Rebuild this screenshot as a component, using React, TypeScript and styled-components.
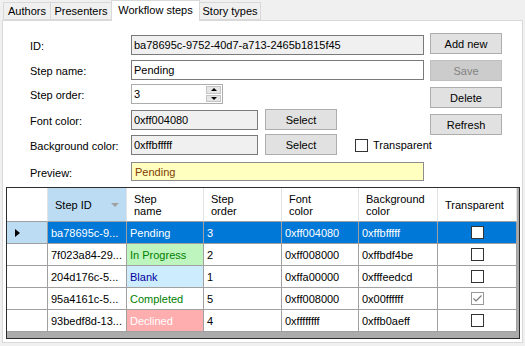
import React from 'react';
import styled, { createGlobalStyle } from 'styled-components';

const GlobalStyle = createGlobalStyle`
  html, body { margin: 0; padding: 0; background: #f0f0f0; }
  body { font-family: "Liberation Sans", Arial, sans-serif; font-size: 11px; color: #000; }
  * { box-sizing: border-box; }
`;

const Window = styled.div`
  width: 525px;
  height: 346px;
  padding: 0 2px 3px 2px;
  display: flex;
  flex-direction: column;
  overflow: hidden;
`;

const TabStrip = styled.div`
  height: 20px;
  display: flex;
  align-items: flex-end;
  padding-left: 1px;
`;

const Tab = styled.div<{ $w: number; $active?: boolean }>`
  width: ${p => p.$w}px;
  height: ${p => (p.$active ? 21 : 18)}px;
  margin-bottom: ${p => (p.$active ? -1 : 0)}px;
  position: relative;
  z-index: ${p => (p.$active ? 1 : 0)};
  border: 1px solid #d9d9d9;
  border-bottom: ${p => (p.$active ? 'none' : '1px solid #d9d9d9')};
  margin-right: -1px;
  background: ${p => (p.$active ? '#ffffff' : '#f0f0f0')};
  display: flex;
  align-items: center;
  justify-content: center;
  padding-bottom: ${p => (p.$active ? 2 : 0)}px;
`;

const Page = styled.div`
  flex: 1;
  border: 1px solid #d9d9d9;
  background: #ffffff;
  display: flex;
  flex-direction: column;
`;

const FormArea = styled.div`
  display: flex;
  gap: 6px;
  padding: 12px 0 0 27px;
`;

const Fields = styled.div`
  margin-top: 2px;
  width: 394px;
  display: grid;
  grid-template-columns: 101px 127px 7px 72px 87px;
  grid-template-rows: 25px 24px 26px 25px 27px 19px;
  align-items: start;
`;

const Label = styled.div`
  grid-column: 1;
  height: 20px;
  display: flex;
  align-items: center;
  padding-top: 1px;
`;

const TextBox = styled.input<{ $wide?: boolean; $readonly?: boolean }>`
  grid-column: ${p => (p.$wide ? '2 / -1' : '2')};
  width: 100%;
  height: 20px;
  border: 1px solid #7a7a7a;
  background: ${p => (p.$readonly ? '#f0f0f0' : '#ffffff')};
  font: inherit;
  color: #000;
  padding: 0 2px;
  margin: 0;
  outline: none;
`;

const Preview = styled.div<{ $bg: string; $fg: string }>`
  grid-column: 2 / -1;
  height: 19px;
  border: 1px solid #8c8c8c;
  background: ${p => p.$bg};
  color: ${p => p.$fg};
  display: flex;
  align-items: center;
  padding: 0 3px;
`;

const Numeric = styled.div`
  grid-column: 2;
  width: 92px;
  height: 20px;
  border: 1px solid #acacac;
  display: flex;
  background: #fff;
`;

const NumericText = styled.div`
  flex: 1;
  display: flex;
  align-items: center;
  padding: 0 2px;
`;

const Spinner = styled.div`
  width: 16px;
  display: flex;
  flex-direction: column;
  padding: 1px 1px 1px 0;
  gap: 1px;
`;

const SpinButton = styled.div<{ $down?: boolean }>`
  flex: 1;
  background: #e6e6e6;
  border: 1px solid #c4c4c4;
  display: flex;
  align-items: center;
  justify-content: center;
  &::after {
    content: '';
    border-left: 3px solid transparent;
    border-right: 3px solid transparent;
    ${p => (p.$down ? 'border-top: 3px solid #000;' : 'border-bottom: 3px solid #000;')}
  }
`;

const Button = styled.button`
  width: 72px;
  height: 21px;
  border: 1px solid #adadad;
  background: #e1e1e1;
  font: inherit;
  color: #000;
  padding: 0;
  margin: 0;
  &:disabled {
    background: #cccccc;
    border-color: #bfbfbf;
    color: #838383;
  }
`;

const SelectButton = styled(Button)`
  grid-column: 4;
  margin-top: -1px;
`;

const Buttons = styled.div`
  display: flex;
  flex-direction: column;
  gap: 6px;
`;

const CheckRow = styled.label`
  grid-column: 5;
  height: 20px;
  display: flex;
  align-items: center;
  gap: 5px;
  padding-left: 18px;
  white-space: nowrap;
`;

const Box = styled.span<{ $checked?: boolean }>`
  flex-shrink: 0;
  width: 13px;
  height: 13px;
  border: 1px solid ${p => (p.$checked ? '#999999' : '#333333')};
  background: #fff;
  display: inline-flex;
  align-items: center;
  justify-content: center;
`;

const Grid = styled.div`
  margin: 6px 2px 0 3px;
  height: 152px;
  border: 1px solid #2d2d2d;
  background: #ababab;
  overflow: hidden;
`;

const Row = styled.div<{ $head?: boolean }>`
  display: grid;
  grid-template-columns: 41px 79px 77px 78px 77px 79px 79px;
  height: ${p => (p.$head ? 34 : 22)}px;
  width: 510px;
`;

const HeadCell = styled.div<{ $sorted?: boolean }>`
  background: ${p => (p.$sorted ? '#bcdcf4' : '#ffffff')};
  border-right: 1px solid #e3e3e3;
  border-bottom: 1px solid #a0a0a0;
  display: flex;
  align-items: center;
  padding: 0 4px 0 7px;
  line-height: 12px;
`;

const SortGlyph = styled.span`
  margin-left: auto;
  margin-right: 3px;
  border-left: 4px solid transparent;
  border-right: 4px solid transparent;
  border-top: 4px solid #a0a0a0;
`;

const RowHeader = styled.div<{ $sel?: boolean }>`
  background: ${p => (p.$sel ? '#bcdcf4' : '#ffffff')};
  border-right: 1px solid #a0a0a0;
  border-bottom: 1px solid #a0a0a0;
  display: flex;
  align-items: center;
  padding-left: 8px;
`;

const Arrow = styled.span`
  border-left: 5px solid #000;
  border-top: 4px solid transparent;
  border-bottom: 4px solid transparent;
`;

const Cell = styled.div<{ $sel?: boolean; $bg?: string; $fg?: string; $center?: boolean }>`
  background: ${p => (p.$sel ? '#0078d7' : p.$bg || '#ffffff')};
  color: ${p => (p.$sel ? '#ffffff' : p.$fg || '#000000')};
  border-right: 1px solid #a0a0a0;
  border-bottom: 1px solid #a0a0a0;
  display: flex;
  align-items: center;
  justify-content: ${p => (p.$center ? 'center' : 'flex-start')};
  padding-left: ${p => (p.$center ? 0 : 3)}px;
  white-space: nowrap;
  overflow: hidden;
`;

interface Step {
  id: string;
  name: string;
  order: number;
  font: string;
  back: string;
  fg: string;
  bg: string;
  transparent: boolean;
}

const steps: Step[] = [
  { id: 'ba78695c-9...', name: 'Pending', order: 3, font: '0xff004080', back: '0xffbfffff', fg: '#804000', bg: '#ffffbf', transparent: false },
  { id: '7f023a84-29...', name: 'In Progress', order: 2, font: '0xff008000', back: '0xffbdf4be', fg: '#008000', bg: '#bef4bd', transparent: false },
  { id: '204d176c-5...', name: 'Blank', order: 1, font: '0xffa00000', back: '0xfffeedcd', fg: '#0000a0', bg: '#cdedfe', transparent: false },
  { id: '95a4161c-5...', name: 'Completed', order: 5, font: '0xff008000', back: '0x00ffffff', fg: '#008000', bg: '#ffffff', transparent: true },
  { id: '93bedf8d-13...', name: 'Declined', order: 4, font: '0xffffffff', back: '0xffb0aeff', fg: '#ffffff', bg: '#ffaeb0', transparent: false },
];

const Check = ({ checked }: { checked?: boolean }) => (
  <Box $checked={checked}>
    {checked && (
      <svg width="9" height="7" viewBox="0 0 9 7">
        <polyline points="0.5,3.5 3,6 8.5,0.5" fill="none" stroke="#7a7a7a" strokeWidth="1.2" />
      </svg>
    )}
  </Box>
);

const App: React.FC = () => {
  const current = steps[0];
  return (
    <Window>
      <GlobalStyle />
      <TabStrip>
        <Tab $w={48}>Authors</Tab>
        <Tab $w={62}>Presenters</Tab>
        <Tab $w={89} $active>Workflow steps</Tab>
        <Tab $w={62}>Story types</Tab>
      </TabStrip>
      <Page>
        <FormArea>
          <Fields>
            <Label>ID:</Label>
            <TextBox $wide $readonly readOnly value="ba78695c-9752-40d7-a713-2465b1815f45" />

            <Label>Step name:</Label>
            <TextBox $wide readOnly value={current.name} />

            <Label>Step order:</Label>
            <Numeric>
              <NumericText>{current.order}</NumericText>
              <Spinner>
                <SpinButton />
                <SpinButton $down />
              </Spinner>
            </Numeric>

            <Label>Font color:</Label>
            <TextBox $readonly readOnly value={current.font} />
            <SelectButton>Select</SelectButton>

            <Label>Background color:</Label>
            <TextBox $readonly readOnly value={current.back} />
            <SelectButton>Select</SelectButton>
            <CheckRow>
              <Check />
              Transparent
            </CheckRow>

            <Label>Preview:</Label>
            <Preview $bg={current.bg} $fg={current.fg}>{current.name}</Preview>
          </Fields>
          <Buttons>
            <Button>Add new</Button>
            <Button disabled>Save</Button>
            <Button>Delete</Button>
            <Button>Refresh</Button>
          </Buttons>
        </FormArea>

        <Grid>
          <Row $head>
            <HeadCell />
            <HeadCell $sorted>
              Step ID
              <SortGlyph />
            </HeadCell>
            <HeadCell>Step<br />name</HeadCell>
            <HeadCell>Step<br />order</HeadCell>
            <HeadCell>Font<br />color</HeadCell>
            <HeadCell>Background<br />color</HeadCell>
            <HeadCell>Transparent</HeadCell>
          </Row>
          {steps.map((s, i) => {
            const sel = i === 0;
            return (
              <Row key={s.id}>
                <RowHeader $sel={sel}>{sel && <Arrow />}</RowHeader>
                <Cell $sel={sel}>{s.id}</Cell>
                <Cell $sel={sel} $bg={s.bg} $fg={s.fg}>{s.name}</Cell>
                <Cell $sel={sel}>{s.order}</Cell>
                <Cell $sel={sel}>{s.font}</Cell>
                <Cell $sel={sel}>{s.back}</Cell>
                <Cell $sel={sel} $center><Check checked={s.transparent} /></Cell>
              </Row>
            );
          })}
        </Grid>
      </Page>
    </Window>
  );
};

export default App;
